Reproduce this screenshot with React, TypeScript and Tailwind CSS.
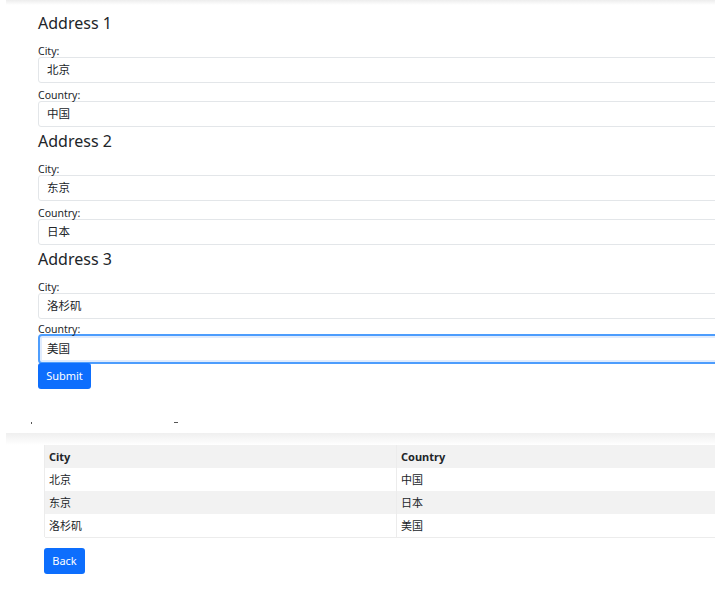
const font = { fontFamily: '"Noto Sans", "Noto Sans CJK SC", sans-serif' }

type Address = { city: string; country: string }

const addresses: Address[] = [
  { city: "北京", country: "中国" },
  { city: "东京", country: "日本" },
  { city: "洛杉矶", country: "美国" },
]

function Field({ label, value, focused }: { label: string; value: string; focused?: boolean }) {
  return (
    <>
      <div className={focused ? "h-[15px] pt-[5px] text-[10.5px] leading-[11px] text-[#212529]" : "h-[18px] pt-[7px] text-[10.5px] leading-[11px] text-[#212529]"}>
        {label}
      </div>
      <div
        className={
          focused
            ? "mb-[-2px] flex h-[30px] w-[700px] items-center rounded-[4px] border-2 border-[#4d9dfd] bg-white pl-[7px] text-[11.5px] text-[#212529] shadow-[inset_0_0_0_2px_#e1ecfd]"
            : "flex h-[26px] w-[700px] items-center rounded-[3px] border border-[#e3e6e9] bg-white pl-[8px] text-[11.5px] text-[#212529]"
        }
      >
        {value}
      </div>
    </>
  )
}

function Section({ index, address }: { index: number; address: Address }) {
  const isLast = index === addresses.length
  return (
    <div>
      <div className="flex h-[28px] items-center text-[16px] text-[#212529]">Address {index}</div>
      <div className="h-[20px] pt-[9px] text-[10.5px] leading-[11px] text-[#212529]">City:</div>
      <div className="flex h-[26px] w-[700px] items-center rounded-[3px] border border-[#e3e6e9] bg-white pl-[8px] text-[11.5px] text-[#212529]">
        {address.city}
      </div>
      <Field label="Country:" value={address.country} focused={isLast} />
    </div>
  )
}

export default function App() {
  return (
    <div className="h-[596px] w-[715px] overflow-hidden bg-white" style={font}>
      {/* top edge of the first capture */}
      <div className="ml-[6px] h-[5px] bg-gradient-to-b from-[#ededed] to-white" />

      <div className="mt-[4px] pl-[38px]">
        {addresses.map((a, i) => (
          <Section key={i} index={i + 1} address={a} />
        ))}
        <button className="relative h-[26px] w-[53px] rounded-[3px] bg-[#0d6efd] text-[11px] text-white">Submit</button>
      </div>

      {/* leftover marks of the cut */}
      <div className="mt-[33px] flex h-[2px] items-start">
        <span className="ml-[31px] h-[2px] w-[1px] bg-[#555]" />
        <span className="ml-[142px] h-[1px] w-[4px] bg-[#555]" />
      </div>

      {/* top edge of the second capture */}
      <div className="ml-[6px] mt-[9px] h-[12px] bg-gradient-to-b from-[#efefef] to-white" />

      <div className="pl-[44px]">
        <table className="w-[700px] border-collapse text-left text-[11px] text-[#212529]">
          <thead>
            <tr className="h-[23px] bg-[#f2f2f2]">
              <th className="w-[352px] border-l border-[#ececec] pl-[4px] font-bold">City</th>
              <th className="border-l border-[#ececec] pl-[4px] font-bold">Country</th>
            </tr>
          </thead>
          <tbody>
            {addresses.map((a, i) => (
              <tr key={i} className={i % 2 === 1 ? "h-[23px] bg-[#f2f2f2]" : "h-[23px] bg-white"}>
                <td className="border-l border-[#ececec] pl-[4px]">{a.city}</td>
                <td className="border-l border-[#ececec] pl-[4px]">{a.country}</td>
              </tr>
            ))}
            <tr className="h-[1px] bg-[#ececec]">
              <td colSpan={2} />
            </tr>
          </tbody>
        </table>
        <button className="mt-[10px] h-[26px] w-[41px] rounded-[3px] bg-[#0d6efd] text-[11px] text-white">Back</button>
      </div>
    </div>
  )
}
